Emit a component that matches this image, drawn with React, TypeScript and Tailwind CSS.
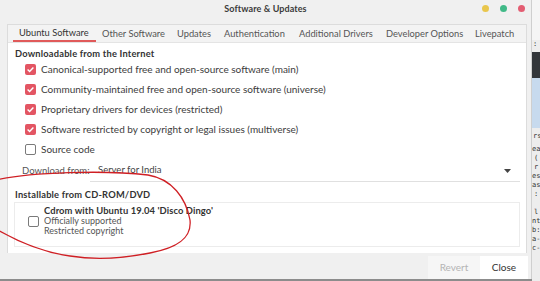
const tabs = [
  { label: "Ubuntu Software", w: "w-[83px]", active: true },
  { label: "Other Software", w: "w-[75px]" },
  { label: "Updates", w: "w-[47px]" },
  { label: "Authentication", w: "w-[75px]" },
  { label: "Additional Drivers", w: "w-[87px]" },
  { label: "Developer Options", w: "w-[89px]" },
  { label: "Livepatch", w: "w-[50px]" },
];

const sources = [
  { label: "Canonical-supported free and open-source software (main)", checked: true },
  { label: "Community-maintained free and open-source software (universe)", checked: true },
  { label: "Proprietary drivers for devices (restricted)", checked: true },
  { label: "Software restricted by copyright or legal issues (multiverse)", checked: true },
  { label: "Source code", checked: false },
];

function Check({ checked }: { checked: boolean }) {
  if (checked) {
    return (
      <div className="flex items-center justify-center w-[11px] h-[11px] rounded-[2px] bg-[#e35563]">
        <svg width="9" height="9" viewBox="0 0 9 9">
          <path d="M1.6 4.6 L3.6 6.5 L7.4 2.4" fill="none" stroke="#fff" strokeWidth="1.4" />
        </svg>
      </div>
    );
  }
  return <div className="w-[11px] h-[11px] rounded-[2px] border border-[#7a7a7a] bg-white" />;
}

export default function App() {
  return (
    <div className="relative flex w-[540px] h-[281px] overflow-hidden bg-[#8c8c8c] font-['Lato',sans-serif] text-[10px] text-[#3c3c3c]">
      {/* window */}
      <div className="flex flex-col w-[532px] h-[279px] shrink-0 bg-[#f0f0f0] border-r border-[#cfcfcf]">
        {/* title bar */}
        <div className="grid grid-cols-[1fr_auto_1fr] items-center h-[17px]">
          <div />
          <div className="font-bold text-[9px] tracking-[0.1px] text-[#3a3a3a]">Software &amp; Updates</div>
          <div className="flex justify-end items-center gap-[11px] pr-[6px]">
            <span className="w-[7px] h-[7px] rounded-full bg-[#e9c64c]" />
            <span className="w-[7px] h-[7px] rounded-full bg-[#40b987]" />
            <span className="w-[7px] h-[7px] rounded-full bg-[#e35d72]" />
          </div>
        </div>

        {/* notebook */}
        <div className="flex flex-col ml-[7px] mr-[4px] mt-[7px] h-[229px] border-t border-l border-r border-[#dcdcdc]">
          <div className="flex h-[17px] pl-[5px] bg-[#f3f3f3] text-[9.3px]">
            {tabs.map((t) => (
              <div
                key={t.label}
                className={`${t.w} flex items-center pl-[6px] h-full whitespace-nowrap ${
                  t.active ? "border-b-2 border-[#e05a5a] text-[#333]" : "text-[#555]"
                }`}
              >
                {t.label}
              </div>
            ))}
          </div>

          <div className="flex flex-col flex-1 bg-white pt-[4px] border-t border-[#e4e4e4]">
            <div className="pl-[7px] font-bold text-[9.3px] tracking-[0.2px] text-[#333] leading-[13px]">
              Downloadable from the Internet
            </div>
            <div className="flex flex-col -mt-[1px]">
              {sources.map((s) => (
                <div key={s.label} className="flex items-center h-[20px] pl-[17px] gap-[5px] whitespace-nowrap">
                  <Check checked={s.checked} />
                  <span>{s.label}</span>
                </div>
              ))}
            </div>

            <div className="flex items-center h-[22px] mt-[1px]">
              <span className="pl-[14px] w-[82px] whitespace-nowrap text-[9.5px] text-[#555]">Download from:</span>
              <div className="flex flex-1 items-center justify-between h-full mr-[6px] border-b border-[#e0e0e0] pl-[8px] pr-[9px]">
                <span className="text-[9.5px] text-[#444]">Server for India</span>
                <svg width="7" height="4" viewBox="0 0 7 4">
                  <path d="M0 0 L7 0 L3.5 4 Z" fill="#444" />
                </svg>
              </div>
            </div>

            <div className="pl-[7px] mt-[6px] font-bold text-[9.3px] tracking-[0.2px] text-[#333] leading-[13px]">
              Installable from CD-ROM/DVD
            </div>
            <div className="flex items-start h-[45px] ml-[6px] mr-[6px] mt-[1px] pt-[3px] border border-[#ececec]">
              <div className="pl-[13px] pr-[5px] pt-[10px]">
                <Check checked={false} />
              </div>
              <div className="flex flex-col text-[9px] leading-[10px]">
                <span className="font-bold text-[9.4px] tracking-[0.1px] text-[#333]">Cdrom with Ubuntu 19.04 'Disco Dingo'</span>
                <span className="text-[#555]">Officially supported</span>
                <span className="text-[#555]">Restricted copyright</span>
              </div>
            </div>
          </div>
        </div>

        {/* buttons */}
        <div className="flex justify-end items-stretch flex-1 pt-[3px] mr-[3px]">
          <div className="flex items-center justify-center w-[52px] bg-[#f6f6f6] text-[#b4b4b4]">Revert</div>
          <div className="flex items-center justify-center w-[48px] bg-white text-[#333]">Close</div>
        </div>
      </div>

      {/* backdrop */}
      <div className="flex flex-col flex-1 bg-[#ededed] font-['DejaVu_Sans_Mono',monospace] text-[7px] leading-[9px] text-[#333]">
        <div className="h-[40px] bg-[#f5f5f5]" />
        <div className="h-[12px] pl-px">:</div>
        <div className="h-[26px] bg-[#33363a]" />
        <div className="h-[50px] bg-[#c7daee]" />
        <div className="pt-[4px] pl-px">rs</div>
        <div className="pt-[4px]">
          <div>ea</div>
          <div className="pl-[2px]">(</div>
          <div className="pl-[2px]">r</div>
          <div>es</div>
          <div>as</div>
          <div className="pl-[2px]">:</div>
          <div>&nbsp;</div>
          <div className="pl-[2px]">l</div>
          <div>nt</div>
          <div>b:</div>
          <div>a-</div>
          <div>c-</div>
        </div>
      </div>

      {/* hand-drawn annotation */}
      <svg className="absolute left-0 top-0 pointer-events-none" width="540" height="281" viewBox="0 0 540 281">
        <path
          d="M-4 180 C 30 172, 105 170, 148 175 C 172 179, 186 198, 190 220 C 192 238, 178 248, 150 253 C 125 258, 95 260, 70 256 C 40 252, 15 240, -4 229"
          fill="none"
          stroke="#cf1f24"
          strokeWidth="1.3"
          strokeLinecap="round"
        />
      </svg>
    </div>
  );
}
